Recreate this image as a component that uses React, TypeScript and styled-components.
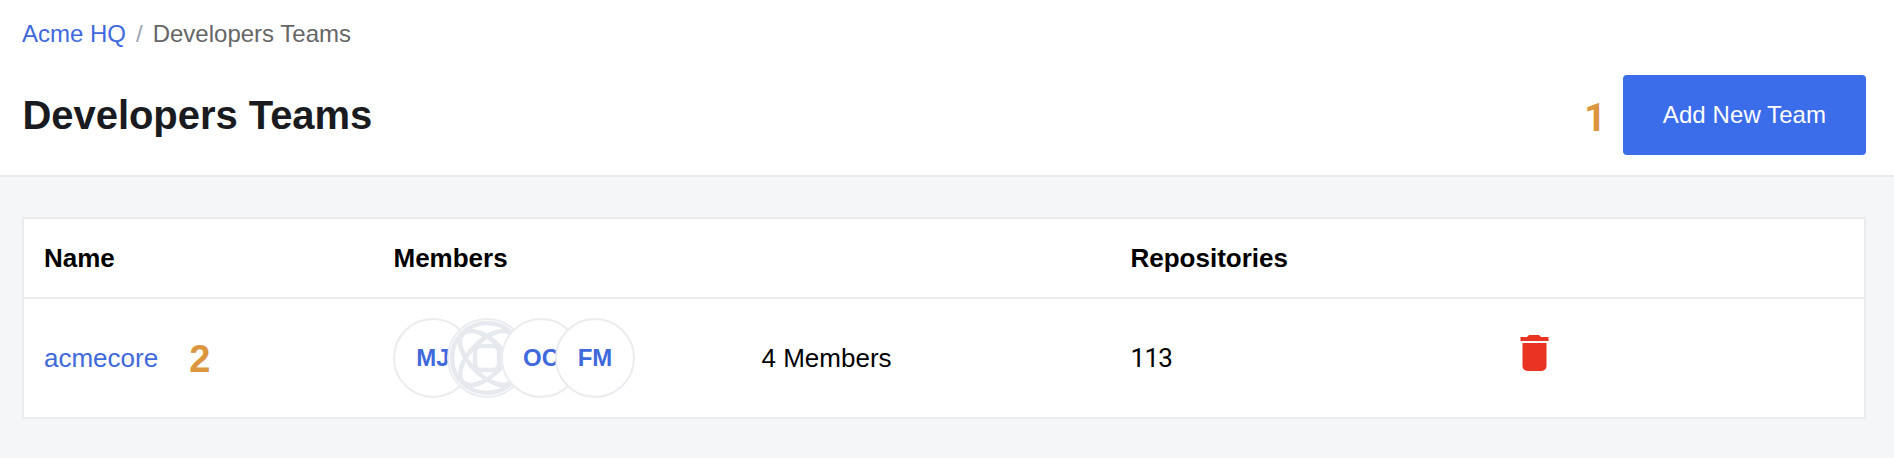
import React from "react";
import styled, { createGlobalStyle } from "styled-components";

const Global = createGlobalStyle`
  * { box-sizing: border-box; }
  body { margin: 0; background: #f5f6f8; font-family: "Liberation Sans", Arial, sans-serif; }
`;
const Page = styled.div`
  min-height: 458px;
  background: #f5f6f8;
`;
const Header = styled.header`
  height: 177px;
  padding: 19px 28px 0 22px;
  background: #fff;
  border-bottom: 2px solid #ececed;
`;
const Breadcrumb = styled.nav`
  display: flex;
  gap: 10px;
  height: 30px;
  font-size: 24px;
  line-height: 30px;
  color: #666;
`;
const Link = styled.a`
  color: #4069dc;
  text-decoration: none;
`;
const Slash = styled.span`
  color: #a0a6b5;
`;
const TitleRow = styled.div`
  display: flex;
  align-items: center;
  height: 80px;
  margin-top: 26px;
`;
const Title = styled.h1`
  margin: 0 auto 0 0;
  padding-left: 0.5px;
  font-size: 40px;
  line-height: 48px;
  letter-spacing: -0.05px;
  color: #1a1b20;
`;
const Marker = styled.span<{ $space: string; $plain?: boolean }>`
  margin: ${(p) => p.$space};
  font-family: ${(p) => (p.$plain ? "Roboto" : '"Liberation Sans"')}, Arial, sans-serif;
  font-size: 38px;
  line-height: 40px;
  font-weight: 700;
  color: #dc963f;
`;
const Button = styled.button`
  width: 243px;
  height: 80px;
  padding: 0;
  border: 0;
  border-radius: 4px;
  background: #3b6deb;
  color: #fff;
  font: 24px "Liberation Sans", Arial, sans-serif;
  letter-spacing: 0.08px;
`;
const Table = styled.section`
  margin: 40px 28px 0 22px;
  border: 2px solid #ececed;
  background: #fff;
  color: #000;
  font-size: 26px;
`;
const Row = styled.div<{ $head?: boolean }>`
  display: grid;
  grid-template-columns: 349px 368px 369px 390px 1fr;
  align-items: center;
  height: ${(p) => (p.$head ? 80 : 118)}px;
  padding-left: 20px;
  font-weight: ${(p) => (p.$head ? 700 : 400)};
  border-bottom: ${(p) => (p.$head ? "2px solid #ececed" : "0")};
`;
const Cell = styled.div<{ $inset?: number }>`
  display: flex;
  align-items: center;
  padding-left: ${(p) => p.$inset ?? 0}px;
`;
const Count = styled.span`
  font-family: Roboto, Arial, sans-serif;
  letter-spacing: -0.7px;
`;
const DeleteButton = styled.button`
  display: flex;
  margin-bottom: 10px;
  padding: 0;
  border: 0;
  background: none;
`;
const Avatar = styled.div`
  display: flex;
  flex: none;
  align-items: center;
  justify-content: center;
  width: 80px;
  height: 80px;
  border: 2px solid #ebecef;
  border-radius: 50%;
  background: #fff;
  overflow: hidden;
  color: #4069dc;
  font-size: 24px;
  font-weight: 700;
  & + & { margin-left: -26px; }
`;

const Identicon = () => (
  <svg width="76" height="76" viewBox="-38 -38 76 76" fill="none" stroke="#e6e9ee" strokeWidth="4.5">
    <circle r="35" />
    <ellipse rx="34" ry="17" transform="rotate(45)" />
    <ellipse rx="34" ry="17" transform="rotate(-45)" />
    <rect x="-12" y="-12" width="24" height="24" rx="6" />
  </svg>
);
const Trash = () => (
  <svg width="29" height="36" viewBox="0 0 29 36" fill="#e93323">
    <path d="M0.5 2H7l2-2h10l2 2h7.5v4h-28zM2.5 8h24v23a5 5 0 0 1-5 5h-14a5 5 0 0 1-5-5z" />
  </svg>
);

export default function App() {
  return (
    <Page>
      <Global />
      <Header>
        <Breadcrumb>
          <Link>Acme HQ</Link>
          <Slash>/</Slash>
          <span>Developers Teams</span>
        </Breadcrumb>
        <TitleRow>
          <Title>Developers Teams</Title>
          <Marker $plain $space="5px 17px 0 0">1</Marker>
          <Button>Add New Team</Button>
        </TitleRow>
      </Header>
      <Table>
        <Row $head>
          <Cell>Name</Cell>
          <Cell $inset={0.5}>Members</Cell>
          <Cell />
          <Cell $inset={0.5}>Repositories</Cell>
        </Row>
        <Row>
          <Cell>
            <Link>acmecore</Link>
            <Marker $space="1px 0 0 31px">2</Marker>
          </Cell>
          <Cell>
            <Avatar>MJ</Avatar>
            <Avatar><Identicon /></Avatar>
            <Avatar>OC</Avatar>
            <Avatar>FM</Avatar>
          </Cell>
          <Cell $inset={0.5}>4 Members</Cell>
          <Cell $inset={0.5}><Count>113</Count></Cell>
          <Cell>
            <DeleteButton aria-label="Delete team"><Trash /></DeleteButton>
          </Cell>
        </Row>
      </Table>
    </Page>
  );
}
